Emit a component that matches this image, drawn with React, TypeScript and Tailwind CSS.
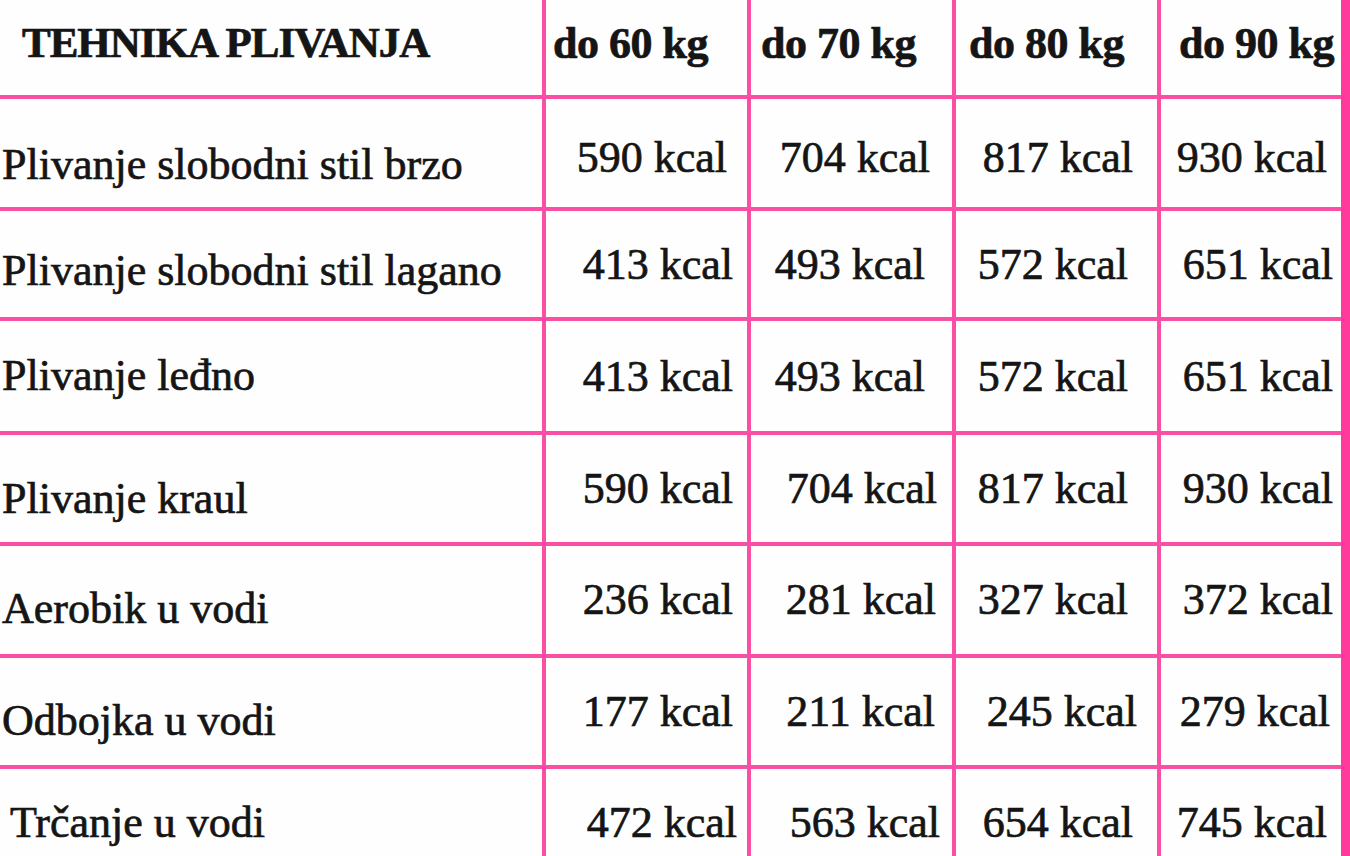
import React from 'react';

interface Row {
  name: string;
  values: string[];
  height: string;
  nameClass: string;
  pads: string[];
  numPad: string;
}

const headers = ['do 60 kg', 'do 70 kg', 'do 80 kg', 'do 90 kg'];
const headerPads = ['pl-[7px]', 'pl-[10px]', 'pl-[13px]', 'pl-[18px]'];
const cellWidths = ['w-[205px]', 'w-[205px]', 'w-[205px]', 'w-[184px]'];

const rows: Row[] = [
  {
    name: 'Plivanje slobodni stil brzo',
    values: ['590 kcal', '704 kcal', '817 kcal', '930 kcal'],
    height: 'h-[112px]',
    nameClass: 'pl-[2px] pt-[24px]',
    pads: ['pr-[20px]', 'pr-[22px]', 'pr-[24px]', 'pr-[14px]'],
    numPad: 'pt-[10px]',
  },
  {
    name: 'Plivanje slobodni stil lagano',
    values: ['413 kcal', '493 kcal', '572 kcal', '651 kcal'],
    height: 'h-[110px]',
    nameClass: 'pl-[2px] pt-[14px]',
    pads: ['pr-[14px]', 'pr-[27px]', 'pr-[29px]', 'pr-[8px]'],
    numPad: 'pt-[2px]',
  },
  {
    name: 'Plivanje leđno',
    values: ['413 kcal', '493 kcal', '572 kcal', '651 kcal'],
    height: 'h-[114px]',
    nameClass: 'pl-[2px] pt-[0px]',
    pads: ['pr-[14px]', 'pr-[27px]', 'pr-[29px]', 'pr-[8px]'],
    numPad: 'pt-[2px]',
  },
  {
    name: 'Plivanje kraul',
    values: ['590 kcal', '704 kcal', '817 kcal', '930 kcal'],
    height: 'h-[111px]',
    nameClass: 'pl-[2px] pt-[20px]',
    pads: ['pr-[14px]', 'pr-[15px]', 'pr-[29px]', 'pr-[8px]'],
    numPad: 'pt-[0px]',
  },
  {
    name: 'Aerobik u vodi',
    values: ['236 kcal', '281 kcal', '327 kcal', '372 kcal'],
    height: 'h-[112px]',
    nameClass: 'pl-[2px] pt-[18px]',
    pads: ['pr-[14px]', 'pr-[16px]', 'pr-[29px]', 'pr-[8px]'],
    numPad: 'pt-[0px]',
  },
  {
    name: 'Odbojka u vodi',
    values: ['177 kcal', '211 kcal', '245 kcal', '279 kcal'],
    height: 'h-[111px]',
    nameClass: 'pl-[2px] pt-[18px]',
    pads: ['pr-[14px]', 'pr-[17px]', 'pr-[20px]', 'pr-[11px]'],
    numPad: 'pt-[0px]',
  },
  {
    name: 'Trčanje u vodi',
    values: ['472 kcal', '563 kcal', '654 kcal', '745 kcal'],
    height: 'h-[112px]',
    nameClass: 'pl-[10px] pt-[0px]',
    pads: ['pr-[10px]', 'pr-[12px]', 'pr-[24px]', 'pr-[14px]'],
    numPad: 'pt-[0px]',
  },
];

export default function App() {
  return (
    <div className="w-[1350px] h-[856px] overflow-hidden bg-[#fefefe] text-[#151515] font-['Liberation_Serif','DejaVu_Serif',serif] [-webkit-text-stroke:0.7px_#151515]">
      <div className="flex">
        <div className="flex-1">
          {/* header */}
          <div className="flex h-[99px] border-b-4 border-[#fb4fa6]">
            <div className="w-[542px] flex items-center pl-[22px] pb-2 text-[43px] font-bold tracking-[-1px] whitespace-nowrap">
              TEHNIKA PLIVANJA
            </div>
            {headers.map((h, i) => (
              <div
                key={h}
                className={`${cellWidths[i]} ${headerPads[i]} border-l-4 border-[#fb4fa6] flex items-center pb-2 text-[44px] font-bold tracking-[-0.5px] whitespace-nowrap`}
              >
                {h}
              </div>
            ))}
          </div>

          {rows.map((r) => (
            <div key={r.name} className={`flex ${r.height} border-b-4 border-[#fb4fa6]`}>
              <div className={`w-[542px] flex items-center ${r.nameClass} text-[44px] whitespace-nowrap`}>
                {r.name}
              </div>
              {r.values.map((v, i) => (
                <div
                  key={i}
                  className={`${cellWidths[i]} ${r.pads[i]} ${r.numPad} border-l-4 border-[#fb4fa6] flex items-center justify-end text-[44px] whitespace-nowrap`}
                >
                  {v}
                </div>
              ))}
            </div>
          ))}
        </div>
        <div className="w-[9px] h-[856px] bg-[#ff3a9c]" />
      </div>
    </div>
  );
}
